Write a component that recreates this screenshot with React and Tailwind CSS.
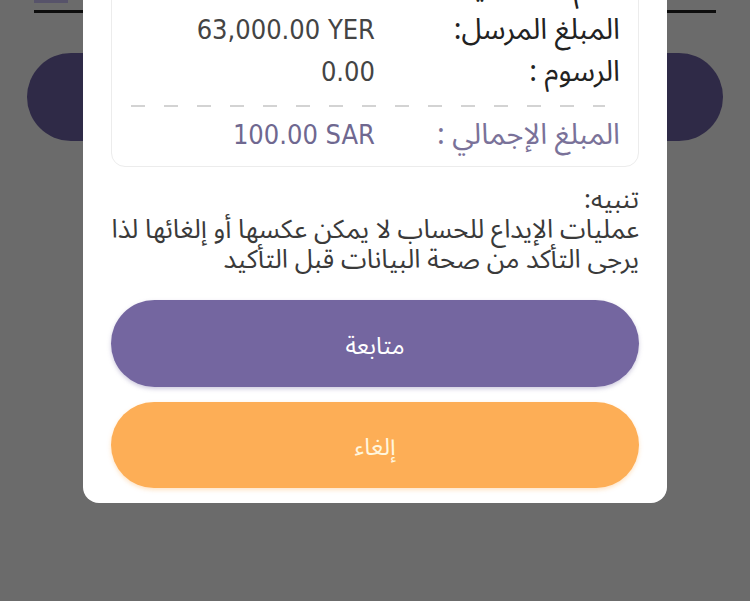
import React from 'react';

const arabicFont = "font-['Noto_Sans_Arabic','DejaVu_Sans',sans-serif]";
const numberFont = "font-['DejaVu_Sans_Condensed','DejaVu_Sans',sans-serif]";

const SummaryRow = ({ label, value, labelClass, valueClass }) => (
    <div className="flex items-center h-[42px]">
        <div className={`w-[245px] shrink-0 text-[29px] leading-[42px] whitespace-nowrap ${arabicFont} ${labelClass}`}>{label}</div>
        <div className={`flex-1 text-[27px] leading-[42px] ${numberFont} ${valueClass}`}>
            <span dir="ltr">{value}</span>
        </div>
    </div>
);

const App = () => {
    return (
        <div className="relative w-[750px] h-[601px] overflow-hidden bg-[#6b6b6b]">
            {/* dimmed page behind the dialog */}
            <div className="flex flex-col">
                <div className="mx-[34px] flex flex-col">
                    <div className="w-[34px] h-[3px] bg-[#57536a]" />
                    <div className="mt-[7px] h-[3px] bg-[#0d0d0d]" />
                </div>
                <div className="mx-[27px] mt-[40px] h-[88px] rounded-full bg-[#2f2a47]" />
            </div>

            {/* dialog */}
            <div
                dir="rtl"
                className="absolute left-[83px] bottom-[98px] w-[584px] bg-white rounded-[16px] px-[28px] pb-[15px] pt-[20px]"
            >
                <div className="border border-[#ececec] rounded-[14px] px-[18px] pt-[14px] pb-[10px]">
                    <SummaryRow label="اسم المستفيد:" value="" labelClass="text-[#222]" valueClass="text-[#444]" />
                    <SummaryRow label="المبلغ المرسل:" value="63,000.00 YER" labelClass="text-[#222]" valueClass="text-[#444]" />
                    <SummaryRow label="الرسوم :" value="0.00" labelClass="text-[#222]" valueClass="text-[#444]" />
                    <div className="mt-[12px] mb-[7px] ml-[1px] mr-[15px] h-[2px] bg-[repeating-linear-gradient(to_right,#d3d3d3_0px,#d3d3d3_14px,transparent_14px,transparent_33px)]" />
                    <SummaryRow label="المبلغ الإجمالي :" value="100.00 SAR" labelClass="text-[#7a7299]" valueClass="text-[#6f6890]" />
                </div>

                <div className={`mt-[18px] text-[26px] leading-[30px] text-[#3a3a3a] ${arabicFont}`}>
                    <div>تنبيه:</div>
                    <div className="whitespace-nowrap">عمليات الإيداع للحساب لا يمكن عكسها أو إلغائها لذا</div>
                    <div className="whitespace-nowrap">يرجى التأكد من صحة البيانات قبل التأكيد</div>
                </div>

                <div className="mt-[25px] flex flex-col gap-[15px]">
                    <button className={`h-[87px] w-full rounded-full bg-[#7466a0] text-white text-[24px] pt-[6px] shadow-[0_2px_4px_rgba(116,102,160,0.35)] ${arabicFont}`}>
                        متابعة
                    </button>
                    <button className={`h-[86px] w-full rounded-full bg-[#fdae56] text-[#fff6de] text-[24px] pt-[6px] shadow-[0_2px_4px_rgba(253,174,86,0.35)] ${arabicFont}`}>
                        إلغاء
                    </button>
                </div>
            </div>
        </div>
    );
};

export default App;
